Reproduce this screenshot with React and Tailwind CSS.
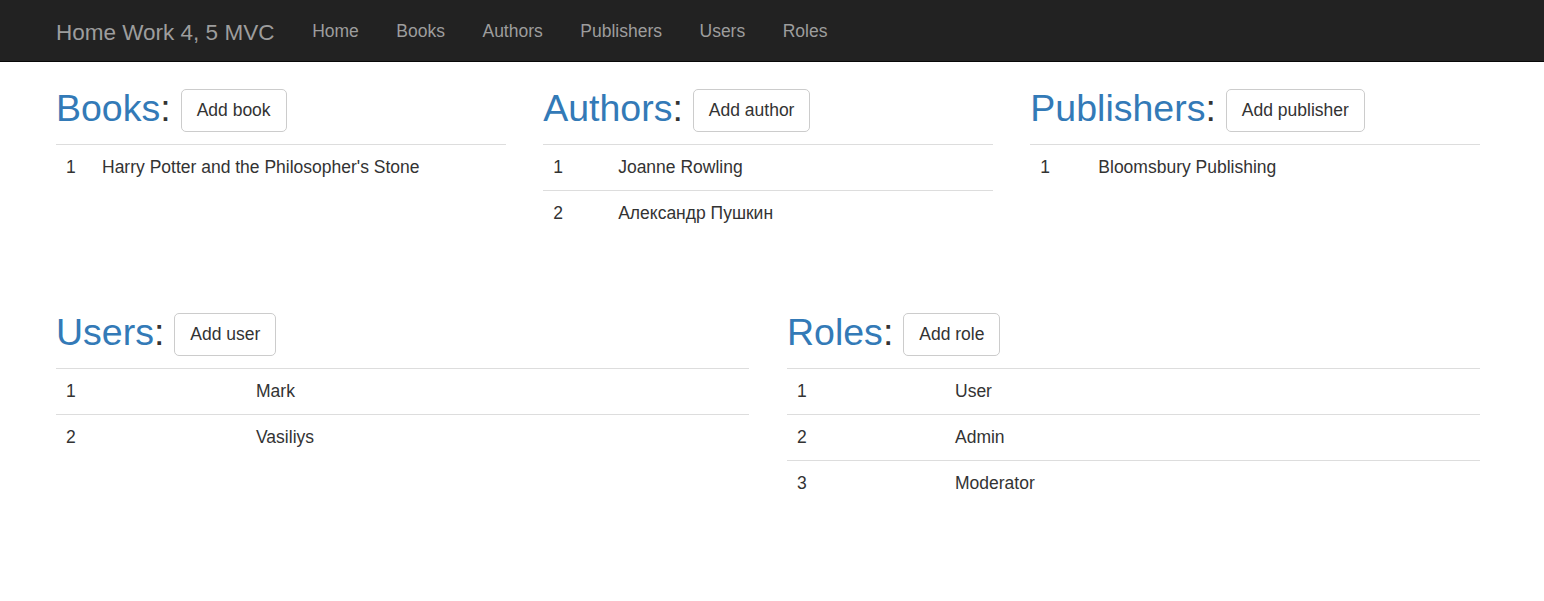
import React from 'react';

const books = [{ id: 1, name: "Harry Potter and the Philosopher's Stone" }];
const authors = [
    { id: 1, name: 'Joanne Rowling' },
    { id: 2, name: 'Александр Пушкин' },
];
const publishers = [{ id: 1, name: 'Bloomsbury Publishing' }];
const users = [
    { id: 1, name: 'Mark' },
    { id: 2, name: 'Vasiliys' },
];
const roles = [
    { id: 1, name: 'User' },
    { id: 2, name: 'Admin' },
    { id: 3, name: 'Moderator' },
];

const navLinks = ['Home', 'Books', 'Authors', 'Publishers', 'Users', 'Roles'];

function Section({ title, button, items, idWidth }) {
    return (
        <div>
            {/* Heading with add button */}
            <div className="flex items-start h-[56px]">
                <h2 className="text-[37.5px] leading-[41px] text-[#333] font-normal">
                    <span className="text-[#337ab7]">{title}</span>:
                </h2>
                <button className="ml-[10px] mt-[1px] h-[42.5px] px-[15px] border border-[#ccc] rounded-[5px] bg-white text-[17.5px] text-[#333] leading-[25px]">
                    {button}
                </button>
            </div>

            <table className="w-full border-collapse">
                <tbody>
                    {items.map((item) => (
                        <tr key={item.id} className="border-t border-[#ddd]">
                            <td className={`px-[10px] py-[10px] leading-[25px] align-top ${idWidth}`}>{item.id}</td>
                            <td className="px-[10px] py-[10px] leading-[25px] align-top">{item.name}</td>
                        </tr>
                    ))}
                </tbody>
            </table>
        </div>
    );
}

export default function App() {
    return (
        <div className="min-h-screen bg-white text-[#333] text-[17.5px] font-['Liberation_Sans',Arial,sans-serif]">
            {/* Navbar */}
            <nav className="h-[62px] bg-[#222] border-b border-[#080808] flex items-start pl-[56px]">
                <span className="text-[22.5px] leading-[25px] pt-[19.5px] text-[#9d9d9d]">Home Work 4, 5 MVC</span>
                <ul className="flex ml-[19px]">
                    {navLinks.map((link) => (
                        <li key={link}>
                            <a className="block px-[18.75px] pt-[18.5px] leading-[25px] text-[#9d9d9d]">{link}</a>
                        </li>
                    ))}
                </ul>
            </nav>

            <div className="ml-[56px] w-[1424px]">
                <div className="grid grid-cols-3 gap-x-[37.5px] items-start mt-[26px]">
                    <Section title="Books" button="Add book" items={books} idWidth="w-[36px]" />
                    <Section title="Authors" button="Add author" items={authors} idWidth="w-[65px]" />
                    <Section title="Publishers" button="Add publisher" items={publishers} idWidth="w-[58px]" />
                </div>

                <div className="grid grid-cols-2 gap-x-[38px] items-start mt-[76px]">
                    <Section title="Users" button="Add user" items={users} idWidth="w-[190px]" />
                    <Section title="Roles" button="Add role" items={roles} idWidth="w-[158px]" />
                </div>
            </div>
        </div>
    );
}
